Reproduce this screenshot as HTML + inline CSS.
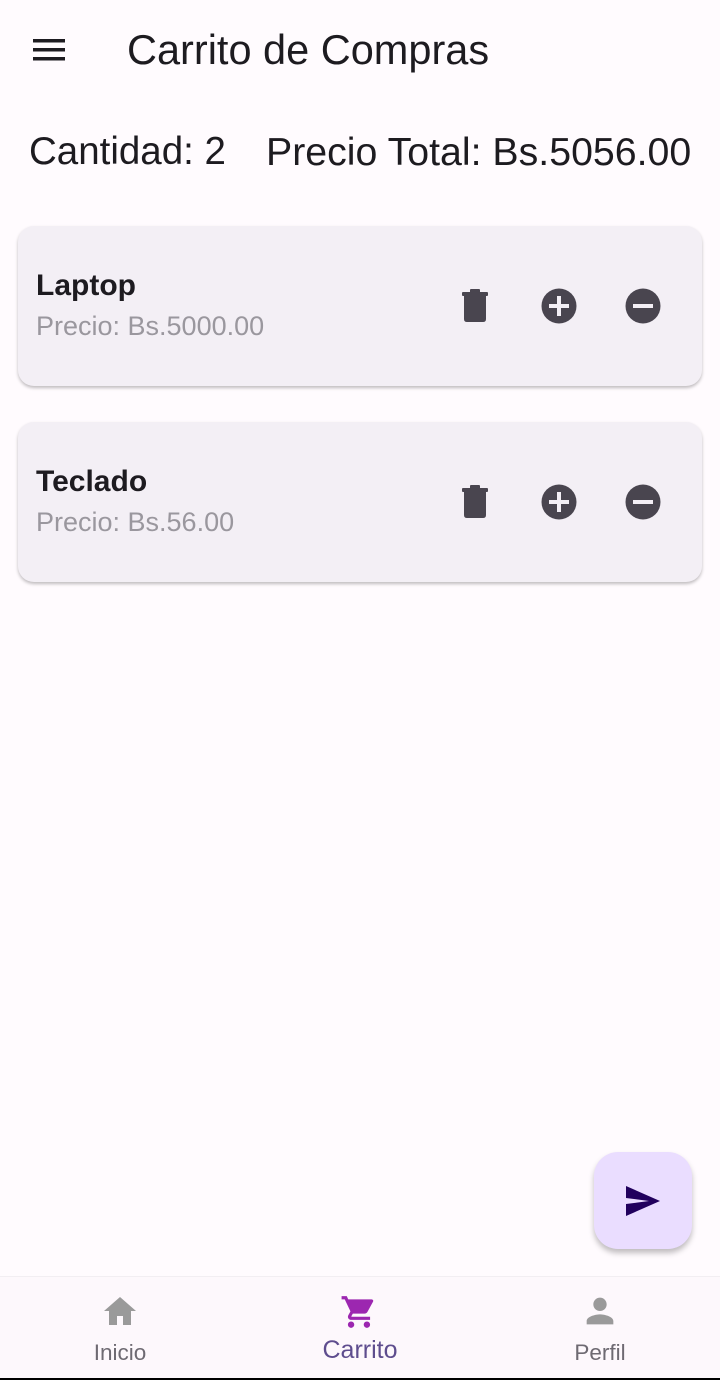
<!DOCTYPE html>
<html><head><meta charset="utf-8"><style>
*{margin:0;padding:0;box-sizing:border-box}
body{width:720px;height:1380px;background:#fffbfe;font-family:"Liberation Sans",sans-serif;position:relative;overflow:hidden;color:#1d1b20}
.abs{position:absolute}
.card{position:absolute;left:18px;width:684px;height:160px;background:#f3eff5;border-radius:16px;box-shadow:0 2px 3px rgba(0,0,0,.25)}
.card .t{position:absolute;left:18px;top:43px;font-size:30px;font-weight:bold}
.card .p{position:absolute;left:18px;top:85px;font-size:27px;color:#9a979e}
.card svg{position:absolute;top:62px}
</style></head><body>
<svg class="abs" style="left:31px;top:36px" width="36" height="28" viewBox="0 0 36 28"><rect x="2" y="3" width="32" height="3.5" fill="#1d1b20"/><rect x="2" y="12" width="32" height="3.5" fill="#1d1b20"/><rect x="2" y="21" width="32" height="3.5" fill="#1d1b20"/></svg>
<div class="abs" style="left:127px;top:26px;font-size:41.5px">Carrito de Compras</div>
<div class="abs" style="left:29px;top:130px;font-size:38.5px">Cantidad: 2</div>
<div class="abs" style="left:266px;top:130px;font-size:39.3px">Precio Total: Bs.5056.00</div>

<div class="card" style="top:226px"><div class="t">Laptop</div><div class="p">Precio: Bs.5000.00</div>
<svg style="left:443px" width="28" height="36" viewBox="0 0 28 36"><rect x="1" y="4" width="26" height="4" rx="1" fill="#49454f"/><rect x="9" y="1" width="10" height="4" rx="1" fill="#49454f"/><path d="M3 8H25V31Q25 34 22 34H6Q3 34 3 31Z" fill="#49454f"/></svg>
<svg style="left:523px;top:62px" width="36" height="36" viewBox="0 0 36 36"><circle cx="18" cy="18" r="17.5" fill="#49454f"/><rect x="8" y="16" width="20" height="4" fill="#f3eff5"/><rect x="16" y="8" width="4" height="20" fill="#f3eff5"/></svg>
<svg style="left:607px;top:62px" width="36" height="36" viewBox="0 0 36 36"><circle cx="18" cy="18" r="17.5" fill="#49454f"/><rect x="8" y="16" width="20" height="4" fill="#f3eff5"/></svg>
</div>
<div class="card" style="top:422px"><div class="t">Teclado</div><div class="p">Precio: Bs.56.00</div>
<svg style="left:443px" width="28" height="36" viewBox="0 0 28 36"><rect x="1" y="4" width="26" height="4" rx="1" fill="#49454f"/><rect x="9" y="1" width="10" height="4" rx="1" fill="#49454f"/><path d="M3 8H25V31Q25 34 22 34H6Q3 34 3 31Z" fill="#49454f"/></svg>
<svg style="left:523px;top:62px" width="36" height="36" viewBox="0 0 36 36"><circle cx="18" cy="18" r="17.5" fill="#49454f"/><rect x="8" y="16" width="20" height="4" fill="#f3eff5"/><rect x="16" y="8" width="4" height="20" fill="#f3eff5"/></svg>
<svg style="left:607px;top:62px" width="36" height="36" viewBox="0 0 36 36"><circle cx="18" cy="18" r="17.5" fill="#49454f"/><rect x="8" y="16" width="20" height="4" fill="#f3eff5"/></svg>
</div>

<div class="abs" style="left:594px;top:1152px;width:98px;height:97px;border-radius:24px;background:#eaddff;box-shadow:0 4px 6px rgba(0,0,0,.25)">
<svg class="abs" style="left:31px;top:33px" width="36" height="32" viewBox="0 0 36 32"><path d="M1 1L35 16L1 31L1 19L24 16L1 13Z" fill="#21005d"/></svg></div>

<div class="abs" style="left:0;top:1276px;width:720px;height:102px;background:#fdf8fc;border-top:1px solid #f2eef2">
<svg class="abs" style="left:102px;top:18px" width="36" height="32" viewBox="0 0 36 32"><path d="M18 2L2 16H7V30H15V21H21V30H29V16H34Z" fill="#9a9a9a"/></svg>
<div class="abs" style="left:0;width:240px;top:63px;text-align:center;font-size:22.5px;color:#6e6a72">Inicio</div>
<svg class="abs" style="left:340px;top:16px" width="38" height="38" viewBox="0 0 24 24"><path d="M7 18c-1.1 0-2 .9-2 2s.9 2 2 2 2-.9 2-2-.9-2-2-2zM1 2v2h2l3.6 7.59-1.35 2.45c-.16.28-.25.61-.25.96 0 1.1.9 2 2 2h12v-2H7.42c-.14 0-.25-.11-.25-.25l.03-.12.9-1.63h7.45c.75 0 1.41-.41 1.75-1.03l3.58-6.49A1 1 0 0 0 20 4H5.21l-.94-2H1zm16 16c-1.1 0-2 .9-2 2s.9 2 2 2 2-.9 2-2-.9-2-2-2z" fill="#9c27b0"/></svg>
<div class="abs" style="left:240px;width:240px;top:59px;text-align:center;font-size:25px;color:#5e4d8e">Carrito</div>
<svg class="abs" style="left:580px;top:14px" width="40" height="40" viewBox="0 0 24 24"><path d="M12 12c2.21 0 4-1.79 4-4s-1.79-4-4-4-4 1.79-4 4 1.79 4 4 4zm0 2c-2.67 0-8 1.34-8 4v2h16v-2c0-2.66-5.33-4-8-4z" fill="#9a9a9a"/></svg>
<div class="abs" style="left:480px;width:240px;top:63px;text-align:center;font-size:22.5px;color:#6e6a72">Perfil</div>
</div>
<div class="abs" style="left:0;top:1378px;width:720px;height:2px;background:#000"></div>
</body></html>
